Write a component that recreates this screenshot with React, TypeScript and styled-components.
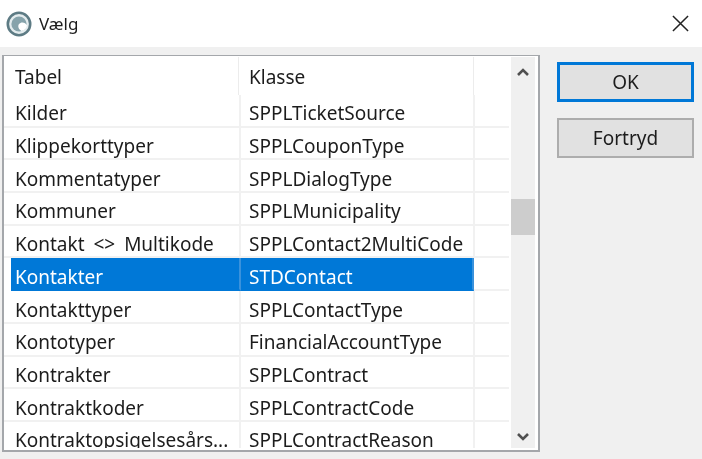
import styled, { createGlobalStyle } from 'styled-components';

const rows = [
  ['Kilder', 'SPPLTicketSource'],
  ['Klippekorttyper', 'SPPLCouponType'],
  ['Kommentatyper', 'SPPLDialogType'],
  ['Kommuner', 'SPPLMunicipality'],
  ['Kontakt <> Multikode', 'SPPLContact2MultiCode'],
  ['Kontakter', 'STDContact'],
  ['Kontakttyper', 'SPPLContactType'],
  ['Kontotyper', 'FinancialAccountType'],
  ['Kontrakter', 'SPPLContract'],
  ['Kontraktkoder', 'SPPLContractCode'],
  ['Kontraktopsigelsesårs...', 'SPPLContractReason'],
];

export default function App() {
  return (
    <>
      <GlobalStyle />
      <Dialog>
        <TitleBar>
          <TitleIcon viewBox="0 0 26 26">
            <circle cx="13" cy="13" r="11.2" fill="#e4ecee" stroke="#5d7b84" strokeWidth="2.6" />
            <circle cx="13" cy="13" r="7.6" fill="#86a3ab" />
            <path d="M21 14.5c-1.5-3.5-6-4-8-1.5-1.5 2-.5 5.5 2.5 7 3-.5 5-3 5.5-5.5z" fill="#fff" />
          </TitleIcon>
          <Title>Vælg</Title>
          <CloseIcon viewBox="0 0 18 18">
            <path d="M1 1l16 16M17 1L1 17" stroke="#222" strokeWidth="1.6" fill="none" />
          </CloseIcon>
        </TitleBar>
        <Body>
          <ListBox>
            <Table>
              <HeaderRow>
                <HeaderCell $width={235} $indent={11}>Tabel</HeaderCell>
                <HeaderCell $width={235} $indent={10}>Klasse</HeaderCell>
              </HeaderRow>
              {rows.map(([table, cls]) => {
                const selected = table === 'Kontakter';
                return (
                  <Row key={table} $selected={selected}>
                    <Cell $width={selected ? 230 : 237} $indent={selected ? 4 : 11} $selected={selected}>{table}</Cell>
                    <Cell $width={selected ? 233 : 234} $indent={8} $selected={selected}>{cls}</Cell>
                    <EmptyCell />
                  </Row>
                );
              })}
            </Table>
            <ScrollBar>
              <Arrow $top={10} $bottom={6} viewBox="0 0 14 10">
                <path d="M2 8l5-5 5 5" stroke="#505050" strokeWidth="2.6" fill="none" />
              </Arrow>
              <Track>
                <Thumb />
              </Track>
              <Arrow $top={6} $bottom={6} viewBox="0 0 14 10">
                <path d="M2 2l5 5 5-5" stroke="#505050" strokeWidth="2.6" fill="none" />
              </Arrow>
            </ScrollBar>
          </ListBox>
          <Buttons>
            <Button $primary>OK</Button>
            <Button>Fortryd</Button>
          </Buttons>
        </Body>
      </Dialog>
    </>
  );
}

const GlobalStyle = createGlobalStyle`
  html, body {
    margin: 0;
    padding: 0;
    background: #f0f0f0;
  }
`;

const Dialog = styled.div`
  width: 702px;
  height: 459px;
  overflow: hidden;
  font-family: 'Noto Sans', 'Open Sans', sans-serif;
  font-size: 19px;
  word-spacing: 4px;
  color: #1c1c1c;
  background: #f0f0f0;
  filter: blur(0.3px);
`;

const TitleBar = styled.div`
  height: 47px;
  display: flex;
  align-items: center;
  padding: 0 13px 0 6px;
  background: #fff;
`;

const TitleIcon = styled.svg`
  width: 26px;
  height: 26px;
`;

const Title = styled.span`
  margin-left: 7px;
  flex: 1;
  font-size: 17px;
`;

const CloseIcon = styled.svg`
  width: 17px;
  height: 17px;
`;

const Body = styled.div`
  display: flex;
  padding: 8px 0 0 2px;
`;

const ListBox = styled.div`
  width: 538px;
  height: 397px;
  box-sizing: border-box;
  display: flex;
  border: 2px solid #a4a7ab;
  border-top-width: 1px;
  background: #fff;
`;

const Table = styled.div`
  width: 506px;
  height: 392px;
  overflow: hidden;
`;

const HeaderRow = styled.div`
  height: 39px;
  display: flex;
  padding-top: 1px;
  box-sizing: border-box;
`;

const HeaderCell = styled.div<{ $width: number; $indent: number }>`
  width: ${(p) => p.$width}px;
  box-sizing: border-box;
  padding-left: ${(p) => p.$indent}px;
  padding-top: 7px;
  border-right: 1px solid #ececec;
`;

const Row = styled.div<{ $selected?: boolean }>`
  height: 32.7px;
  box-sizing: border-box;
  display: flex;
  padding-left: ${(p) => (p.$selected ? 7 : 0)}px;
`;

const Cell = styled.div<{ $width: number; $indent: number; $selected?: boolean }>`
  width: ${(p) => p.$width}px;
  box-sizing: border-box;
  padding: 3.4px 0 0 ${(p) => p.$indent}px;
  line-height: 31px;
  white-space: nowrap;
  overflow: hidden;
  border-right: 2px solid ${(p) => (p.$selected ? '#3a92dc' : '#f1f1f1')};
  border-bottom: 2px solid ${(p) => (p.$selected ? '#0078d7' : '#f1f1f1')};
  background: ${(p) => (p.$selected ? '#0078d7' : 'transparent')};
  color: ${(p) => (p.$selected ? '#fff' : 'inherit')};
`;

const EmptyCell = styled.div`
  flex: 1;
  margin-right: 1px;
  border-bottom: 2px solid #f1f1f1;
`;

const ScrollBar = styled.div`
  width: 24px;
  margin: 1px 0 2px 1px;
  display: flex;
  flex-direction: column;
  align-items: center;
  background: #f0f0f0;
`;

const Arrow = styled.svg<{ $top: number; $bottom: number }>`
  width: 14px;
  height: 10px;
  margin: ${(p) => p.$top}px 0 ${(p) => p.$bottom}px;
  flex-shrink: 0;
`;

const Track = styled.div`
  flex: 1;
  width: 100%;
  padding-top: 116px;
`;

const Thumb = styled.div`
  height: 36px;
  background: #cdcdcd;
`;

const Buttons = styled.div`
  display: flex;
  flex-direction: column;
  gap: 16px;
  margin: 7px 0 0 17px;
`;

const Button = styled.div<{ $primary?: boolean }>`
  width: 137px;
  height: 40px;
  box-sizing: border-box;
  display: flex;
  align-items: center;
  justify-content: center;
  background: #e1e1e1;
  border: ${(p) => (p.$primary ? '3px solid #0078d7' : '2px solid #adadad')};
`;
